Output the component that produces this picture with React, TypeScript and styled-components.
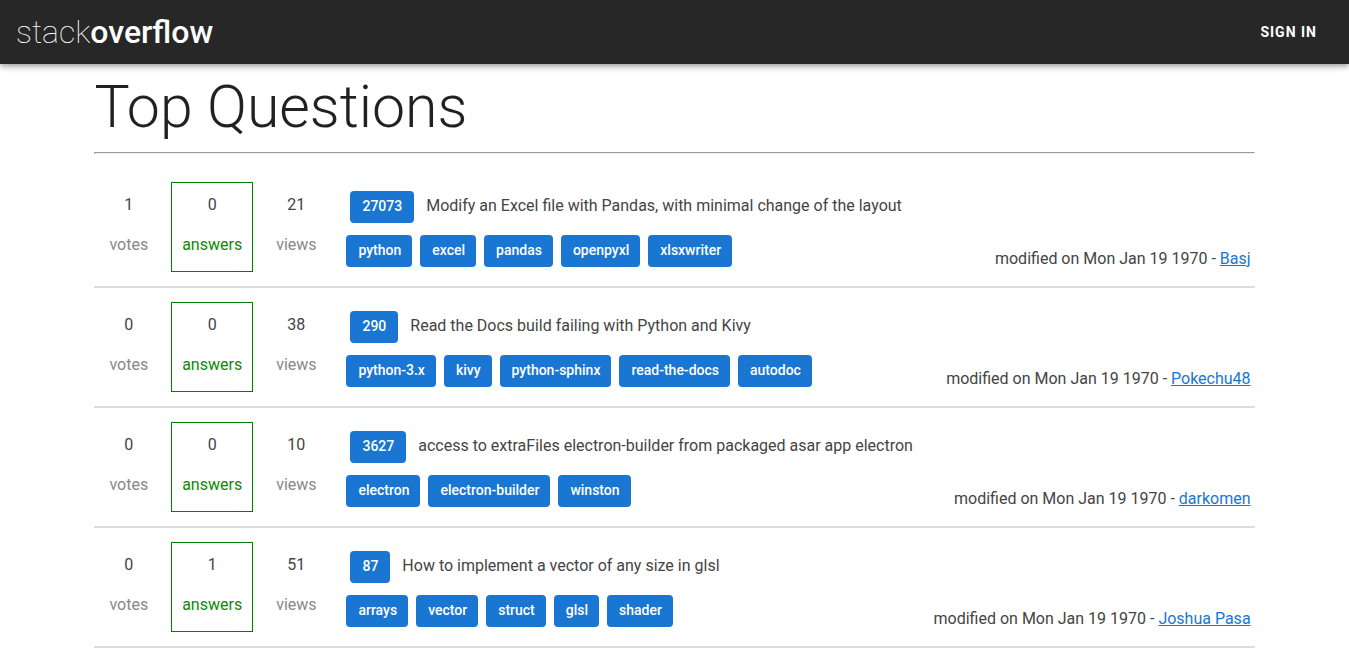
import React from "react";
import styled, { createGlobalStyle } from "styled-components";

const GlobalStyle = createGlobalStyle`
  *, *::before, *::after { box-sizing: border-box; }
  body {
    margin: 0;
    background: #fff;
    color: rgba(0, 0, 0, 0.87);
    font-family: Roboto, "Liberation Sans", sans-serif;
    font-size: 16px;
    line-height: 24px;
  }
`;

const Toolbar = styled.header`
  position: relative;
  display: flex;
  align-items: center;
  justify-content: space-between;
  height: 64px;
  padding: 0 16px;
  background: #272727;
  color: #fff;
  box-shadow: 0 2px 4px -1px rgba(0, 0, 0, 0.2), 0 4px 5px 0 rgba(0, 0, 0, 0.14),
    0 1px 10px 0 rgba(0, 0, 0, 0.12);
`;

const Logo = styled.a`
  color: inherit;
  text-decoration: none;
  font-size: 32px;
  font-weight: 100;
  line-height: 40px;

  strong {
    font-weight: 500;
  }
`;

const SignInButton = styled.button`
  height: 36px;
  padding: 0 16px;
  border: 0;
  background: transparent;
  color: inherit;
  font: 700 14px/20px Roboto, sans-serif;
  letter-spacing: 1px;
  text-transform: uppercase;
  cursor: pointer;
`;

const Page = styled.main`
  margin: 0 7%;
`;

const Title = styled.h1`
  margin: 0;
  padding: 13px 0 15px;
  font-size: 59px;
  font-weight: 300;
  line-height: 60px;
`;

const Divider = styled.hr`
  margin: 0 0 14px;
  border: 1px inset;
`;

const QuestionList = styled.ul`
  margin: 0;
  padding: 0;
  list-style: none;
`;

const QuestionRow = styled.li`
  display: flex;
  padding: 14px 4px;
  border-bottom: 2px solid #ddd;
`;

const Stats = styled.div`
  display: flex;
  gap: 12px;
  width: 248px;
  flex: none;
`;

const Stat = styled.div<{ $answers?: boolean }>`
  display: flex;
  flex-direction: column;
  align-items: center;
  gap: 16px;
  padding: 10px 10px 14px;
  border: 1px solid ${(p) => (p.$answers ? "green" : "transparent")};
`;

const StatValue = styled.span`
  color: #444;
`;

const StatLabel = styled.span<{ $answers?: boolean }>`
  color: ${(p) => (p.$answers ? "#0a8a0a" : "#888")};
`;

const Summary = styled.div`
  display: flex;
  flex-direction: column;
  gap: 12px;
  flex: 1;
  padding-top: 9px;
`;

const Heading = styled.div`
  display: flex;
  gap: 12px;
  padding-left: 4px;
`;

const QuestionTitle = styled.span`
  padding-top: 3px;
  color: #444;
`;

const Badge = styled.span`
  height: 32px;
  padding: 5px 12px 7px;
  border-radius: 4px;
  background: #1976d2;
  color: #fff;
  font-size: 14px;
  font-weight: 500;
  line-height: 20px;
`;

const Tag = styled(Badge).attrs({ as: "a" })<{ href: string }>`
  padding-right: 11px;
  text-decoration: none;
`;

const Tags = styled.div`
  display: flex;
  flex-wrap: wrap;
  gap: 8px;
`;

const Modified = styled.p`
  align-self: flex-end;
  margin: 0;
  padding-bottom: 1px;
  color: #444;

  a {
    color: #1976d2;
  }
`;

interface Question {
  votes: number;
  answers: number;
  views: number;
  reputation: number;
  title: string;
  tags: string[];
  author: string;
}

const questions: Question[] = [
  {
    votes: 1,
    answers: 0,
    views: 21,
    reputation: 27073,
    title: "Modify an Excel file with Pandas, with minimal change of the layout",
    tags: ["python", "excel", "pandas", "openpyxl", "xlsxwriter"],
    author: "Basj",
  },
  {
    votes: 0,
    answers: 0,
    views: 38,
    reputation: 290,
    title: "Read the Docs build failing with Python and Kivy",
    tags: ["python-3.x", "kivy", "python-sphinx", "read-the-docs", "autodoc"],
    author: "Pokechu48",
  },
  {
    votes: 0,
    answers: 0,
    views: 10,
    reputation: 3627,
    title: "access to extraFiles electron-builder from packaged asar app electron",
    tags: ["electron", "electron-builder", "winston"],
    author: "darkomen",
  },
  {
    votes: 0,
    answers: 1,
    views: 51,
    reputation: 87,
    title: "How to implement a vector of any size in glsl",
    tags: ["arrays", "vector", "struct", "glsl", "shader"],
    author: "Joshua Pasa",
  },
];

function QuestionItem({ question }: { question: Question }) {
  return (
    <QuestionRow>
      <Stats>
        <Stat>
          <StatValue>{question.votes}</StatValue>
          <StatLabel>votes</StatLabel>
        </Stat>
        <Stat $answers>
          <StatValue>{question.answers}</StatValue>
          <StatLabel $answers>answers</StatLabel>
        </Stat>
        <Stat>
          <StatValue>{question.views}</StatValue>
          <StatLabel>views</StatLabel>
        </Stat>
      </Stats>
      <Summary>
        <Heading>
          <Badge>{question.reputation}</Badge>
          <QuestionTitle>{question.title}</QuestionTitle>
        </Heading>
        <Tags>
          {question.tags.map((tag) => (
            <Tag key={tag} href={`#${tag}`}>
              {tag}
            </Tag>
          ))}
        </Tags>
      </Summary>
      <Modified>
        modified on Mon Jan 19 1970 - <a href="#author">{question.author}</a>
      </Modified>
    </QuestionRow>
  );
}

export default function App() {
  return (
    <>
      <GlobalStyle />
      <Toolbar>
        <Logo href="#home">
          stack<strong>overflow</strong>
        </Logo>
        <SignInButton type="button">Sign in</SignInButton>
      </Toolbar>
      <Page>
        <Title>Top Questions</Title>
        <Divider />
        <QuestionList>
          {questions.map((question) => (
            <QuestionItem key={question.title} question={question} />
          ))}
        </QuestionList>
      </Page>
    </>
  );
}
